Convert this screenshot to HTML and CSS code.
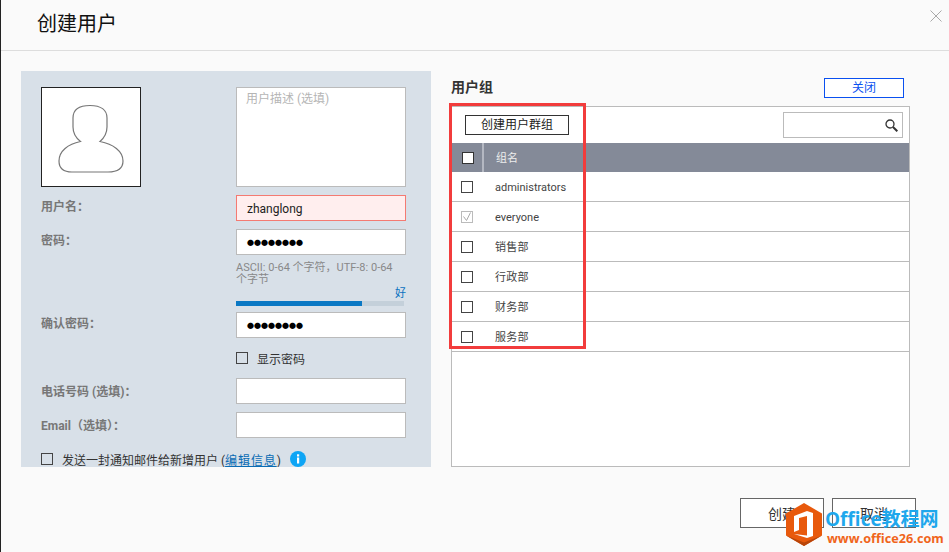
FILE: index.html
```html
<!DOCTYPE html>
<html lang="zh-CN">
<head>
<meta charset="utf-8">
<title>创建用户</title>
<link rel="stylesheet" href="styles.css">
</head>
<body>
<div class="dialog">
  <header class="head">
    <h1 class="title">创建用户</h1>
    <svg class="close" width="12" height="12" viewBox="0 0 12 12"><path d="M.5.5l11 11M11.500.5l-11 11" stroke="#a9a9a9" stroke-width="1" fill="none"/></svg>
  </header>
  <main class="body">
    <section class="panel">
      <div class="row row-top">
        <div class="avatar">
          <svg width="72" height="72" viewBox="0 0 72 72"><path d="M35 4.500C24 4.500 18 9 18 17V26C18 33 21 37 25.500 40.500C13 43 4 50 4 60C4 68 9 71 17 71H53C62 71 68 68 68 60C68 50 58 43 45 40.500C49 37 52 33 52 26V17C52 9 46 4.500 35 4.500Z" fill="#fff" stroke="#777" stroke-width="1.200"/></svg>
        </div>
        <div class="textarea">用户描述 (选填)</div>
      </div>
      <div class="row row-name">
        <label class="label up">用户名：</label>
        <div class="input error">zhanglong</div>
      </div>
      <div class="row row-pass">
        <label class="label up">密码：</label>
        <div class="input dots">●●●●●●●●</div>
      </div>
      <div class="row">
        <span></span>
        <div class="pw-info">
          <p class="hint">ASCII: 0-64 个字符，UTF-8: 0-64 个字节</p>
          <div class="strength">好</div>
          <div class="meter"><div class="meter-fill" style="width:75%"></div></div>
        </div>
      </div>
      <div class="row row-confirm">
        <label class="label up">确认密码：</label>
        <div class="input dots">●●●●●●●●</div>
      </div>
      <div class="row row-show">
        <span></span>
        <label class="check-line"><span class="box"></span><span class="gap-show">显示密码</span></label>
      </div>
      <div class="row row-phone">
        <label class="label">电话号码 (选填)：</label>
        <div class="input"></div>
      </div>
      <div class="row row-email">
        <label class="label">Email（选填）：</label>
        <div class="input"></div>
      </div>
      <div class="notify">
        <span class="box"></span>
        <span class="notify-text">发送一封通知邮件给新增用户 (<a class="link">编辑信息</a>)</span>
        <svg class="info" width="16" height="16" viewBox="0 0 16 16"><circle cx="8" cy="8" r="8" fill="#0ea5f5"/><rect x="7" y="6.500" width="2.200" height="6" fill="#fff"/><rect x="7" y="3.300" width="2.200" height="2.200" fill="#fff"/></svg>
      </div>
    </section>
    <section class="groups">
      <div class="groups-head">
        <h2 class="groups-title">用户组</h2>
        <button class="btn-close">关闭</button>
      </div>
      <div class="table-box">
        <div class="toolbar">
          <button class="btn-create">创建用户群组</button>
          <div class="search">
            <svg width="13" height="13" viewBox="0 0 13 13"><circle cx="5" cy="5" r="4" fill="none" stroke="#333" stroke-width="1.300"/><path d="M8 8l4.300 4.300" stroke="#333" stroke-width="2"/></svg>
          </div>
        </div>
        <div class="thead">
          <div class="th-check"><span class="box white"></span></div>
          <div class="th-name">组名</div>
        </div>
        <div class="tr"><span class="box"></span><span class="td">administrators</span></div>
        <div class="tr"><span class="box muted"><svg width="12" height="12" viewBox="0 0 12 12"><path d="M2.500 5.500l3 4 4-8" fill="none" stroke="#aaa" stroke-width="1"/></svg></span><span class="td">everyone</span></div>
        <div class="tr"><span class="box"></span><span class="td cjk">销售部</span></div>
        <div class="tr"><span class="box"></span><span class="td cjk">行政部</span></div>
        <div class="tr"><span class="box"></span><span class="td cjk">财务部</span></div>
        <div class="tr"><span class="box"></span><span class="td cjk">服务部</span></div>
      </div>
    </section>
  </main>
  <footer class="foot">
    <button class="btn-foot">创建</button>
    <button class="btn-foot">取消</button>
  </footer>
  <div class="highlight"></div>
  <div class="watermark">
    <svg class="wm-logo" width="36" height="43" viewBox="0 0 36 43">
      <path d="M18 0l18 10.500v22L18 43 0 32.500v-22z" fill="#e8590c"/>
      <path d="M0 32.500L18 43l18-10.500-18 7z" fill="#b8450a"/>
      <path d="M8 13l13-5 6 2v23l-6 2-13-4 13 1.500V13l-8 2v12l-5 2z" fill="#fff"/>
    </svg>
    <div class="wm-text">
      <div class="wm-top">Office教程网</div>
      <div class="wm-url">www.office26.com</div>
    </div>
  </div>
</div>
</body>
</html>
```
FILE: styles.css
```css
* { box-sizing: border-box; }
html, body { margin: 0; padding: 0; }
body {
  width: 949px;
  height: 552px;
  overflow: hidden;
  font-family: Roboto, "Noto Sans CJK SC", sans-serif;
  font-size: 12px;
  color: #333;
}
.dialog {
  position: relative;
  width: 949px;
  height: 552px;
  background: #fafafa;
  border-left: 1px solid #222;
  overflow: hidden;
}
.head {
  height: 51px;
  border-bottom: 1px solid #ddd;
  padding-left: 36px;
  display: flex;
  align-items: flex-start;
  justify-content: space-between;
}
.title {
  margin: 11px 0 0;
  font-size: 20px;
  line-height: 26px;
  font-weight: 400;
  color: #111;
}
.close { margin: 10px 7px 0 0; }
.body {
  display: flex;
  padding: 20px 0 0 20px;
}
.panel {
  width: 410px;
  height: 396px;
  background: #d8e0e8;
  padding: 16px 25px 0 20px;
  overflow: hidden;
}
.row {
  display: grid;
  grid-template-columns: 195px 170px;
}
.row-name { margin-top: 8px; }
.row-pass { margin-top: 8px; }
.row-confirm { margin-top: 6px; }
.row-show { margin-top: 14px; }
.row-phone { margin-top: 14px; }
.row-email { margin-top: 8px; }
.avatar {
  width: 100px;
  height: 100px;
  background: #fff;
  border: 1px solid #222;
  display: flex;
  align-items: center;
  justify-content: center;
}
.textarea {
  height: 100px;
  background: #fff;
  border: 1px solid #bbb;
  padding: 3px 9px;
  line-height: 16px;
  color: #b5b5b5;
}
.label {
  height: 26px;
  font-weight: 700;
  color: #777;
  line-height: 28px;
}
.label.up { line-height: 24px; }
.input {
  height: 26px;
  background: #fff;
  border: 1px solid #bbb;
  padding: 0 10px;
  line-height: 26px;
  color: #222;
}
.error {
  background: #ffeeee;
  border-color: #f47a72;
}
.dots {
  font-size: 7px;
  color: #000;
}
.pw-info { padding-top: 7px; }
.hint {
  margin: 0;
  padding-right: 4px;
  font-size: 11px;
  line-height: 12px;
  color: #888;
}
.strength {
  text-align: right;
  font-size: 11px;
  line-height: 12px;
  color: #0a72c0;
  margin-top: 2px;
}
.meter {
  width: 168px;
  height: 5px;
  margin-top: 1px;
  background: #c4d0da;
}
.meter-fill {
  height: 100%;
  background: #0a78c4;
}
.check-line {
  display: flex;
  align-items: center;
  height: 12px;
}
.gap-show { margin-left: 9px; color: #333; }
.box {
  display: block;
  flex: none;
  width: 12px;
  height: 12px;
  border: 1px solid #444;
  background: transparent;
}
.notify {
  display: flex;
  align-items: center;
  height: 16px;
  margin-top: 13px;
}
.notify-text { margin-left: 9px; color: #333; }
.link {
  color: #0a6cb4;
  text-decoration: underline;
  letter-spacing: .9px;
}
.info { margin-left: 9px; flex: none; }
.groups { width: 459px; margin-left: 20px; }
.groups-head {
  height: 35px;
  display: flex;
  align-items: flex-start;
  justify-content: space-between;
  padding-right: 6px;
}
.groups-title {
  margin: 7px 0 0;
  font-size: 14px;
  line-height: 18px;
  font-weight: 700;
  color: #333;
}
.btn-close {
  width: 80px;
  height: 20px;
  margin-top: 7px;
  padding: 0;
  background: #fff;
  border: 1px solid #0a50f0;
  color: #0a50f0;
  font: inherit;
  line-height: 18px;
}
.table-box {
  height: 361px;
  background: #fff;
  border: 1px solid #bbb;
}
.toolbar {
  height: 36px;
  display: flex;
  justify-content: space-between;
  align-items: flex-start;
  padding: 5px 6px 0 13px;
}
.btn-create {
  width: 104px;
  height: 20px;
  margin-top: 3px;
  padding: 0;
  background: #fff;
  border: 1px solid #333;
  color: #222;
  font: inherit;
  line-height: 18px;
}
.search {
  width: 120px;
  height: 26px;
  border: 1px solid #bbb;
  display: flex;
  align-items: center;
  justify-content: flex-end;
  padding-right: 4px;
}
.thead {
  height: 29px;
  background: #848a98;
  display: flex;
  align-items: center;
  color: #eee;
  font-size: 11px;
}
.th-check {
  width: 32px;
  height: 29px;
  padding-left: 10px;
  display: flex;
  align-items: center;
  border-right: 2px solid #b4b8c2;
}
.white { background: #fff; border-color: #333; }
.th-name { padding: 0 0 2px 12px; }
.tr {
  height: 30px;
  display: flex;
  align-items: center;
  padding-left: 9px;
  border-bottom: 1px solid #bbb;
}
.td { margin-left: 22px; padding-top: 1px; font-size: 11px; color: #444; }
.td.cjk { padding: 0 0 2px; letter-spacing: .3px; }
.muted { border-color: #bbb; }
.muted svg { display: block; margin: -1px; width: 12px; height: 12px; }
.foot {
  display: flex;
  justify-content: flex-end;
  gap: 8px;
  padding: 31px 33px 0 0;
}
.btn-foot {
  width: 84px;
  height: 30px;
  padding: 0;
  background: #fff;
  border: 1px solid #666;
  color: #333;
  font: inherit;
  font-size: 14px;
}
.highlight {
  position: absolute;
  left: 448px;
  top: 103px;
  width: 137px;
  height: 246px;
  border: 3px solid #f23c3c;
}
.watermark {
  position: absolute;
  left: 785px;
  top: 503px;
  display: flex;
}
.wm-text { margin-left: 5px; }
.wm-top {
  margin-top: 4px;
  margin-left: -2px;
  font-family: "Open Sans", "Noto Sans CJK SC", sans-serif;
  font-size: 19px;
  line-height: 24px;
  font-weight: 700;
  color: #1ea7ec;
  white-space: nowrap;
}
.wm-url {
  font-family: "Open Sans", sans-serif;
  font-size: 12.700px;
  line-height: 15px;
  font-weight: 700;
  color: #f0651a;
  white-space: nowrap;
}
```
